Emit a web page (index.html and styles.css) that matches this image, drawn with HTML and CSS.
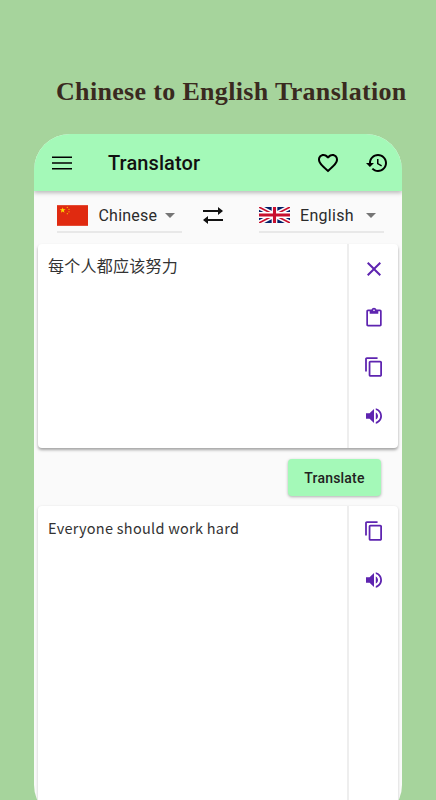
FILE: index.html
```html
<!DOCTYPE html>
<html lang="en">
<head>
    <meta charset="UTF-8">
    <meta name="viewport" content="width=device-width, initial-scale=1.0">
    <title>Chinese to English Translation</title>
    <link rel="stylesheet" href="styles.css">
</head>
<body>
    <svg class="sprites" width="0" height="0">
        <symbol id="i-copy" viewBox="0 0 24 24"><path d="M16 1H4c-1.1 0-2 .9-2 2v14h2V3h12V1zm3 4H8c-1.1 0-2 .9-2 2v14c0 1.1.9 2 2 2h11c1.1 0 2-.9 2-2V7c0-1.1-.9-2-2-2zm0 16H8V7h11v14z"/></symbol>
        <symbol id="i-volume" viewBox="0 0 24 24"><path d="M3 9v6h4l5 5V4L7 9H3zm13.5 3c0-1.77-1.02-3.29-2.5-4.03v8.05c1.48-.73 2.5-2.25 2.5-4.02zM14 3.23v2.06c2.89.86 5 3.54 5 6.71s-2.11 5.85-5 6.71v2.06c4.01-.91 7-4.49 7-8.77 0-4.28-2.99-7.86-7-8.77z"/></symbol>
        <symbol id="i-drop" viewBox="0 0 24 24"><path d="M7 10l5 5 5-5z"/></symbol>
    </svg>

    <h1 class="headline">Chinese to English Translation</h1>

    <div class="phone">
        <div class="appbar">
            <svg class="bar-icon menu-icon" viewBox="0 0 24 24"><path d="M2 18.5h20v-1.6H2v1.6zm0-5.7h20v-1.6H2v1.6zM2 5.5v1.6h20V5.5H2z"/></svg>
            <span class="app-title">Translator</span>
            <svg class="bar-icon heart-icon" viewBox="0 0 24 24"><path d="M16.5 3c-1.74 0-3.41.81-4.5 2.09C10.91 3.81 9.24 3 7.5 3 4.42 3 2 5.42 2 8.5c0 3.78 3.4 6.86 8.55 11.54L12 21.35l1.45-1.32C18.6 15.36 22 12.28 22 8.5 22 5.42 19.58 3 16.5 3zm-4.4 15.55l-.1.1-.1-.1C7.14 14.24 4 11.39 4 8.5 4 6.5 5.5 5 7.5 5c1.54 0 3.04.99 3.57 2.36h1.87C13.46 5.99 14.96 5 16.5 5c2 0 3.5 1.5 3.5 3.5 0 2.89-3.14 5.74-7.9 10.05z"/></svg>
            <svg class="bar-icon" viewBox="0 0 24 24"><path d="M13 3c-4.97 0-9 4.03-9 9H1l3.89 3.89.07.14L9 12H6c0-3.87 3.13-7 7-7s7 3.13 7 7-3.13 7-7 7c-1.93 0-3.68-.79-4.94-2.06l-1.42 1.42C8.27 19.99 10.51 21 13 21c4.97 0 9-4.03 9-9s-4.03-9-9-9zm-1 5v5l4.28 2.54.72-1.21-3.5-2.08V8H12z"/></svg>
        </div>

        <div class="lang-row">
            <div class="lang-select">
                <svg class="flag-cn" viewBox="0 0 30 20">
                    <rect width="30" height="20" fill="#e02a10"/>
                    <polygon fill="#ffde00" points="5.5,2 7.26,7.43 2.65,4.07 8.35,4.07 3.74,7.43"/>
                    <circle cx="10" cy="2.2" r=".6" fill="#f6c000"/>
                    <circle cx="11.6" cy="4" r=".6" fill="#f6c000"/>
                    <circle cx="11.6" cy="6.4" r=".6" fill="#f6c000"/>
                    <circle cx="10" cy="8.2" r=".6" fill="#f6c000"/>
                </svg>
                <span class="lang-name">Chinese</span>
                <svg class="drop-icon"><use href="#i-drop"/></svg>
            </div>
            <svg class="swap-icon" viewBox="0 0 24 24"><path d="M2 6h15V3l5 4-5 4V8H2zM22 15H7v-3l-5 4 5 4v-3h15z"/></svg>
            <div class="lang-select">
                <svg class="flag-uk" viewBox="0 0 60 30" preserveAspectRatio="none">
                    <rect width="60" height="30" fill="#012169"/>
                    <path d="M0 0l60 30M60 0L0 30" stroke="#fff" stroke-width="9"/>
                    <path d="M0 0l60 30M60 0L0 30" stroke="#c8102e" stroke-width="3"/>
                    <path d="M30 0v30M0 15h60" stroke="#fff" stroke-width="11"/>
                    <path d="M30 0v30M0 15h60" stroke="#c8102e" stroke-width="6"/>
                </svg>
                <span class="lang-name lang-name-en">English</span>
                <svg class="drop-icon"><use href="#i-drop"/></svg>
            </div>
        </div>

        <div class="card card-source">
            <div class="card-text card-text-cjk">每个人都应该努力</div>
            <div class="card-actions">
                <svg class="action-icon" viewBox="0 0 24 24"><path d="M19 6.41L17.59 5 12 10.59 6.41 5 5 6.41 10.59 12 5 17.59 6.41 19 12 13.41 17.59 19 19 17.59 13.41 12z"/></svg>
                <svg class="action-icon" viewBox="-2 -2 28 28"><path d="M19 2h-4.18C14.4.84 13.3 0 12 0c-1.3 0-2.4.84-2.82 2H5c-1.1 0-2 .9-2 2v16c0 1.1.9 2 2 2h14c1.1 0 2-.9 2-2V4c0-1.1-.9-2-2-2zm-7 0c.55 0 1 .45 1 1s-.45 1-1 1-1-.45-1-1 .45-1 1-1zm7 18H5V4h2v3h10V4h2v16z"/></svg>
                <svg class="action-icon" viewBox="-1.5 -1.5 27 27"><use href="#i-copy" width="24" height="24"/></svg>
                <svg class="action-icon" viewBox="-1.5 -1.5 27 27"><use href="#i-volume" width="24" height="24"/></svg>
            </div>
        </div>

        <div class="button-row">
            <button class="translate-btn">Translate</button>
        </div>

        <div class="card card-result">
            <div class="card-text">Everyone should work hard</div>
            <div class="card-actions">
                <svg class="action-icon" viewBox="-1.5 -1.5 27 27"><use href="#i-copy" width="24" height="24"/></svg>
                <svg class="action-icon" viewBox="-1.5 -1.5 27 27"><use href="#i-volume" width="24" height="24"/></svg>
            </div>
        </div>
    </div>
</body>
</html>
```

FILE: styles.css
```css
html, body {
    margin: 0;
    padding: 0;
    height: 100%;
}

body {
    background-color: #a6d49c;
    overflow: hidden;
    height: 800px;
}

.sprites {
    display: block;
    height: 0;
}

.headline {
    margin: 0;
    padding: 77px 0 0 56px;
    height: 57px;
    font-family: "Liberation Serif", serif;
    font-size: 26px;
    line-height: 30px;
    font-weight: bold;
    letter-spacing: 0.33px;
    color: #3a2a1f;
    white-space: nowrap;
}

.phone {
    margin: 0 34px;
    height: 687px;
    background-color: #fafafa;
    border-radius: 36px;
    overflow: hidden;
}

.appbar {
    display: flex;
    align-items: center;
    height: 57px;
    padding: 0 13px 0 16px;
    background-color: #a4f9b8;
    box-shadow: 0 2px 4px rgba(0, 0, 0, 0.25);
    position: relative;
}

.bar-icon {
    width: 24px;
    height: 24px;
    fill: #000;
    flex: none;
}

.app-title {
    margin-left: 34px;
    flex: 1;
    font-family: Roboto, sans-serif;
    font-size: 20px;
    font-weight: 500;
    letter-spacing: 0.1px;
    color: #111;
}

.heart-icon {
    margin-right: 25px;
}

.lang-row {
    display: flex;
    align-items: flex-start;
    height: 53px;
    padding-left: 23px;
}

.lang-select {
    display: flex;
    align-items: center;
    width: 125px;
    height: 32px;
    padding-top: 8px;
    border-bottom: 2px solid #e8e8e8;
    flex: none;
}

.flag-cn {
    width: 31px;
    height: 21px;
    flex: none;
}

.flag-uk {
    width: 31px;
    height: 16px;
    flex: none;
}

.lang-name {
    margin-left: 10.5px;
    width: 63.5px;
    font-family: Roboto, sans-serif;
    font-size: 16px;
    letter-spacing: 0.2px;
    color: #2b2b2b;
}

.lang-name-en {
    margin-left: 10px;
    width: 63px;
    letter-spacing: 0.3px;
}

.drop-icon {
    width: 24px;
    height: 24px;
    margin-left: -4px;
    fill: #757575;
    flex: none;
}

.swap-icon {
    width: 24px;
    height: 24px;
    margin: 13px 34px 0 19px;
    fill: #111;
    flex: none;
}

.card {
    display: flex;
    margin: 0 4px;
    background-color: #fff;
    border-radius: 4px;
}

.card-source {
    height: 204px;
    box-shadow: 0 2px 3px rgba(0, 0, 0, 0.35);
}

.card-result {
    height: 330px;
    box-shadow: 0 1px 3px rgba(0, 0, 0, 0.2);
}

.card-text {
    flex: 1;
    padding: 12px 10px;
    font-family: "Noto Sans CJK SC", "Noto Sans", sans-serif;
    font-size: 14.5px;
    line-height: 20px;
    letter-spacing: 0.27px;
    color: #333;
}

.card-text-cjk {
    padding-top: 11px;
    font-size: 16px;
    letter-spacing: 0.25px;
}

.card-actions {
    display: flex;
    flex-direction: column;
    align-items: center;
    gap: 25px;
    width: 49px;
    padding-top: 13px;
    border-left: 2px solid #eeeeee;
}

.action-icon {
    width: 24px;
    height: 24px;
    fill: #5e24b0;
    flex: none;
}

.button-row {
    display: flex;
    justify-content: flex-end;
    padding: 11px 21px 10px 0;
}

.translate-btn {
    width: 93px;
    height: 37px;
    padding: 0;
    border: none;
    border-radius: 4px;
    background-color: #a4f9b8;
    box-shadow: 0 1px 3px rgba(0, 0, 0, 0.3);
    font-family: Roboto, sans-serif;
    font-size: 14px;
    font-weight: 500;
    letter-spacing: 0.2px;
    color: #222;
}
```
